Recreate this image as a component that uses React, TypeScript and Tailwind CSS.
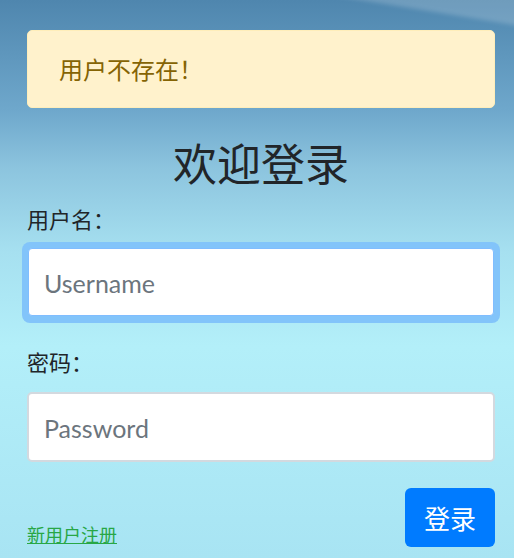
import React from "react";

export default function App() {
  const cjk = { fontFamily: '"Noto Sans CJK SC", "Noto Sans", sans-serif' };
  const latin = { fontFamily: 'Lato, "Open Sans", sans-serif' };
  return (
    <div className="relative w-[514px] h-[558px] overflow-hidden" style={cjk}>
      <svg className="absolute inset-0" width="514" height="558" viewBox="0 0 514 558">
        <defs>
          <linearGradient id="bg" x1="0" y1="0" x2="0" y2="1">
            <stop offset="0" stopColor="#4f86ae" />
            <stop offset="0.2" stopColor="#6fa8cc" />
            <stop offset="0.3" stopColor="#8cc4de" />
            <stop offset="0.45" stopColor="#a6e0f0" />
            <stop offset="0.62" stopColor="#b3eff9" />
            <stop offset="1" stopColor="#a8e4f3" />
          </linearGradient>
          <filter id="blur"><feGaussianBlur stdDeviation="2" /></filter>
        </defs>
        <rect width="514" height="558" fill="url(#bg)" />
        <polygon points="330,-5 520,-5 520,26" fill="#ffffff" opacity="0.18" filter="url(#blur)" />
      </svg>
      <div className="relative flex flex-col pl-[27px] pr-[19px] pt-[30px]">
        <div className="h-[78px] flex items-center pl-[31px] rounded-[5px] bg-[#fff2cc] border border-[#ffeeba] text-[#856404] text-[24px]">
          用户不存在！
        </div>
        <h1 className="mt-[27px] text-center text-[44px] leading-[54px] text-[#212529]">欢迎登录</h1>
        <label className="mt-[13px] text-[22px] leading-[33px] text-[#212529]">用户名：</label>
        <div className="mt-[7px] -mx-[5px] rounded-[8px] bg-[#82c4fa] p-[6px] pb-[7px]">
          <div className="h-[68px] rounded-[4px] bg-white border border-[#80bdff] flex items-center pl-[15px] pt-[3px] text-[25px] text-[#6c757d]" style={latin}>
            Username
          </div>
        </div>
        <label className="mt-[22px] text-[22px] leading-[33px] text-[#212529]">密码：</label>
        <div className="mt-[14px] h-[70px] rounded-[5px] bg-white border-2 border-[#d3d9df] flex items-center pl-[15px] pt-[3px] text-[25px] text-[#6c757d]" style={latin}>
          Password
        </div>
        <div className="mt-[26px] flex items-end justify-between">
          <a className="text-[18px] leading-[22px] text-[#28a745] underline mb-[2px]">新用户注册</a>
          <button className="w-[90px] h-[59px] rounded-[6px] bg-[#007bff] text-white text-[26px]">登录</button>
        </div>
      </div>
    </div>
  );
}
